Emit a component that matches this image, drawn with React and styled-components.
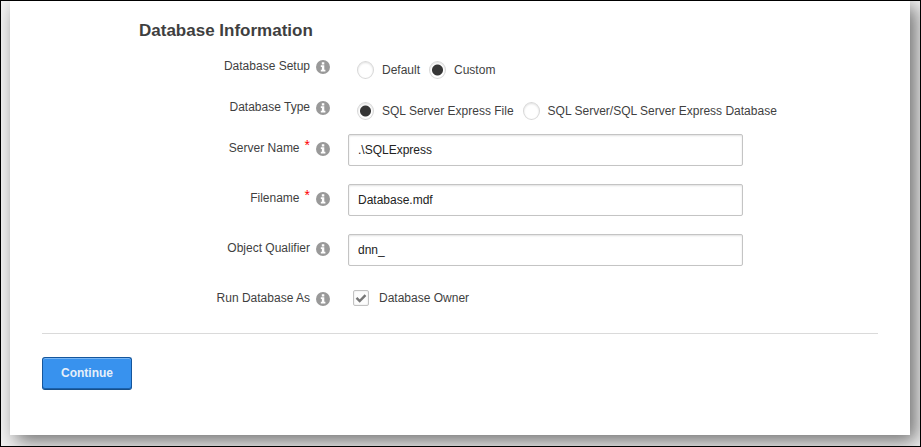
import React, { useState } from "react";
import styled, { createGlobalStyle, css } from "styled-components";

const GlobalStyle = createGlobalStyle`
  * { box-sizing: border-box; }
  body {
    margin: 0;
    background: #f2f2f2;
    color: #3f3f3f;
    font: 12px/16px "Liberation Sans", Arial, sans-serif;
  }
`;

const Frame = styled.div`
  min-height: 100vh;
  padding: 0 10px 11px 9px;
  border: 1px solid #000;
  overflow: hidden;
`;

const Card = styled.main`
  padding: 20px 32px 45px;
  background: #fff;
  box-shadow: 6px 6px 18px rgba(0, 0, 0, 0.55);
`;

const Heading = styled.h2`
  margin: 0 0 9px;
  padding-left: 97px;
  font-size: 17px;
  line-height: 20px;
  font-weight: bold;
`;

const Row = styled.div`
  display: grid;
  grid-template-columns: 288px minmax(0, 1fr);
  column-gap: 18px;
  min-height: ${(p) => (p.$compact ? 41 : 50)}px;
`;

const LabelCell = styled.div`
  display: flex;
  justify-content: flex-end;
  align-items: flex-start;
  gap: 6px;
  padding-top: 8px;
`;

const Label = styled.label`
  display: flex;
  gap: 5px;
`;

const Required = styled.span`
  color: #f00;
  font-size: 14px;
  line-height: 10px;
`;

const HelpButton = styled.button`
  display: flex;
  margin: 2px 0 0;
  padding: 0;
  border: 0;
  background: none;
  cursor: pointer;
`;

const TextInput = styled.input`
  width: 100%;
  max-width: 395px;
  height: 32px;
  margin-top: 2px;
  padding: 0 9px;
  border: 1px solid #c4c4c4;
  border-radius: 2px;
  background: #fff;
  box-shadow: inset 0 1px 2px rgba(0, 0, 0, 0.12);
  color: #222;
  font: inherit;
`;

const Options = styled.div`
  display: flex;
  align-items: flex-start;
  gap: 9px;
  padding: ${(p) => (p.$check ? "8px 0 0 5px" : "11px 0 0 9px")};
`;

const Option = styled.label`
  display: flex;
  align-items: center;
  gap: ${(p) => (p.$check ? 10 : 8)}px;
  white-space: nowrap;
`;

const Radio = styled.input`
  appearance: none;
  width: 17px;
  height: 18px;
  margin: 0;
  border: 1px solid #d8d8d8;
  border-radius: 50%;
  background: #fff;
  box-shadow: inset 0 1px 2px rgba(0, 0, 0, 0.12);
  ${(p) =>
    p.checked &&
    css`
      background: radial-gradient(circle, #363636 5px, #fff 6px);
    `}
`;

const CheckWrap = styled.span`
  display: grid;
  > * { grid-area: 1 / 1; }
  svg { pointer-events: none; }
`;

const Checkbox = styled.input`
  appearance: none;
  width: 16px;
  height: 16px;
  margin: 0;
  border: 1px solid #c2c2c2;
  border-radius: 2px;
  background: #fdfdfd;
  box-shadow: inset 0 0 2px rgba(0, 0, 0, 0.12);
`;

const Divider = styled.hr`
  width: 100%;
  height: 1px;
  margin: 1px 0 23px;
  border: 0;
  background: #dadada;
`;

const ContinueButton = styled.button`
  height: 33px;
  padding: 0 18px 2px;
  border: 1px solid #15569c;
  border-bottom-color: #174f89;
  border-radius: 3px;
  background: #3892ee;
  box-shadow: inset 0 1px 0 #7ab7f5, inset 0 -1px 0 #1b62ad;
  color: #e6effa;
  font: bold 12px/16px "Liberation Sans", Arial, sans-serif;
`;

function InfoIcon() {
  return (
    <svg width="14" height="14" viewBox="0 0 14 14" aria-hidden="true">
      <circle cx="7" cy="7" r="7" fill="#999" />
      <path d="M5.8 2.2h2.5v2.2H5.8zM4.8 5.3h3.5v4.5h1.1v1.6H4.8V9.8h1.1V6.9H4.8z" fill="#fff" />
    </svg>
  );
}

function Field({ label, id, required, compact, children }) {
  return (
    <Row $compact={compact}>
      <LabelCell>
        <Label htmlFor={id} id={`${id}-label`}>
          {label}
          {required && <Required>*</Required>}
        </Label>
        <HelpButton type="button" aria-label={`Help: ${label}`}>
          <InfoIcon />
        </HelpButton>
      </LabelCell>
      {children}
    </Row>
  );
}

function RadioField({ label, id, options }) {
  const [value, setValue] = useState(options.find((o) => o.selected).text);
  return (
    <Field label={label} id={id} compact>
      <Options role="radiogroup" aria-labelledby={`${id}-label`}>
        {options.map(({ text }, i) => (
          <Option key={text}>
            <Radio
              type="radio"
              name={id}
              id={i === 0 ? id : undefined}
              checked={value === text}
              onChange={() => setValue(text)}
            />
            {text}
          </Option>
        ))}
      </Options>
    </Field>
  );
}

function TextField({ label, id, required, value }) {
  return (
    <Field label={label} id={id} required={required}>
      <TextInput type="text" id={id} required={required} defaultValue={value} />
    </Field>
  );
}

export default function App() {
  const [owner, setOwner] = useState(true);
  return (
    <>
      <GlobalStyle />
      <Frame>
        <Card>
          <form onSubmit={(e) => e.preventDefault()}>
            <Heading>Database Information</Heading>
            <RadioField
              label="Database Setup"
              id="setup"
              options={[{ text: "Default" }, { text: "Custom", selected: true }]}
            />
            <RadioField
              label="Database Type"
              id="type"
              options={[
                { text: "SQL Server Express File", selected: true },
                { text: "SQL Server/SQL Server Express Database" },
              ]}
            />
            <TextField label="Server Name" id="server" required value=".\SQLExpress" />
            <TextField label="Filename" id="filename" required value="Database.mdf" />
            <TextField label="Object Qualifier" id="qualifier" value="dnn_" />
            <Field label="Run Database As" id="owner">
              <Options $check>
                <Option $check>
                  <CheckWrap>
                    <Checkbox
                      type="checkbox"
                      id="owner"
                      checked={owner}
                      onChange={(e) => setOwner(e.target.checked)}
                    />
                    {owner && (
                      <svg width="16" height="16" viewBox="0 0 16 16" aria-hidden="true">
                        <path d="M3.5 7.8l3.2 3.2 5.8-5.8" fill="none" stroke="#777" strokeWidth="2.4" />
                      </svg>
                    )}
                  </CheckWrap>
                  Database Owner
                </Option>
              </Options>
            </Field>
            <Divider />
            <ContinueButton type="submit">Continue</ContinueButton>
          </form>
        </Card>
      </Frame>
    </>
  );
}
